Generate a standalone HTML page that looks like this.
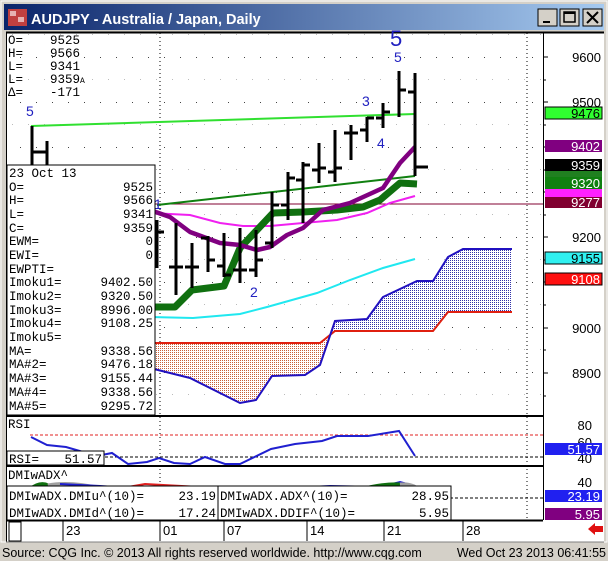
<!DOCTYPE html>
<html><head><meta charset="utf-8"><style>
body{margin:0;width:608px;height:561px;overflow:hidden;background:#d4d0c8;font-family:"Liberation Sans",sans-serif}
svg{display:block}
.m{font-family:"Liberation Mono",monospace;font-size:12.5px}
</style></head><body>
<svg width="608" height="561" viewBox="0 0 608 561" xmlns="http://www.w3.org/2000/svg">
<defs>
<linearGradient id="tb" x1="0" x2="1"><stop offset="0" stop-color="#0a246a"/><stop offset="1" stop-color="#a6caf0"/></linearGradient>
<pattern id="pr" width="2" height="2" patternUnits="userSpaceOnUse"><rect width="2" height="2" fill="#fff"/><rect width="1" height="1" fill="#c8603a"/></pattern>
<pattern id="pb" width="2" height="2" patternUnits="userSpaceOnUse"><rect width="2" height="2" fill="#fff"/><rect width="1" height="1" fill="#3030a8"/></pattern>
<pattern id="gd" width="16" height="45" patternUnits="userSpaceOnUse" x="4" y="57"><rect x="0" y="0" width="1" height="1" fill="#444"/><rect x="8" y="22" width="1" height="1" fill="#bbb"/></pattern>
</defs>
<rect x="0" y="0" width="608" height="561" fill="#d4d0c8"/>
<rect x="1" y="1" width="606" height="541" fill="none" stroke="#fff"/>
<rect x="4" y="4" width="600" height="26" fill="url(#tb)"/>
<rect x="8" y="9" width="19" height="17" fill="#c04040"/><rect x="10" y="11" width="6" height="5" fill="#fff" opacity=".6"/><rect x="18" y="17" width="6" height="5" fill="#fff" opacity=".6"/>
<text x="31" y="24" fill="#fff" font-weight="bold" font-size="14.5">AUDJPY - Australia / Japan, Daily</text>
<g stroke="#000" fill="#d4d0c8">
<rect x="538" y="9" width="19" height="17"/><rect x="560" y="9" width="19" height="17"/><rect x="583" y="9" width="19" height="17"/>
</g>
<rect x="543" y="21" width="7" height="2" fill="#000"/>
<rect x="564" y="12" width="11" height="10" fill="none" stroke="#000" stroke-width="1.5"/><rect x="564" y="12" width="11" height="2" fill="#000"/>
<path d="M587 12l11 11M598 12l-11 11" stroke="#000" stroke-width="2"/>
<rect x="6" y="32" width="598" height="510" fill="#fff"/>
<rect x="6" y="32" width="537" height="383" fill="url(#gd)"/>
<line x1="6" y1="32.5" x2="604" y2="32.5" stroke="#000" stroke-width="2"/>
<line x1="6.5" y1="32" x2="6.5" y2="542" stroke="#000"/>
<line x1="543.5" y1="32" x2="543.5" y2="520" stroke="#000"/>
<line x1="160" y1="33" x2="160" y2="520" stroke="#000" stroke-dasharray="1,3"/>
<line x1="527" y1="33" x2="527" y2="520" stroke="#000" stroke-dasharray="1,3"/>
<g stroke="#000">
<path d="M543 57h5M543 80h3M543 102h5M543 125h3M543 147h5M543 170h3M543 192h5M543 215h3M543 237h5M543 260h3M543 282h5M543 305h3M543 328h5M543 350h3M543 373h5M543 396h3"/>
</g>
<g font-size="13" fill="#000" text-anchor="end">
<text x="601" y="62">9600</text><text x="601" y="107">9500</text><text x="601" y="242">9200</text><text x="601" y="333">9000</text><text x="601" y="378">8900</text>
</g>
<polygon points="150,343 320,343 329,337 320,365 305,375 272,376 256,400 240,403 190,378 150,368" fill="url(#pr)"/>
<polygon points="329,337 335,321 367,319 383,297 417,281 433,281 448,257 463,249 512,249 512,312 448,312 433,331 335,331" fill="url(#pb)"/>
<polyline points="150,343 320,343 335,331 433,331 448,312 512,312" fill="none" stroke="#e02010" stroke-width="2"/>
<polyline points="150,368 190,378 240,403 256,400 272,376 305,375 320,365 335,321 367,319 383,297 417,281 433,281 448,257 463,249 512,249" fill="none" stroke="#2010c0" stroke-width="2"/>
<line x1="155" y1="204" x2="543" y2="204" stroke="#800030" stroke-width="1"/>
<polyline points="150,317 193,318 240,314 267,307 317,293 350,280 383,268 415,259" fill="none" stroke="#20e8f0" stroke-width="2"/>
<polyline points="31,126 415,114" fill="none" stroke="#30e030" stroke-width="2"/>
<polyline points="157,205 415,176" fill="none" stroke="#108010" stroke-width="2"/>
<polyline points="150,213 190,215 220,223 243,226 270,226 303,223 337,220 367,213 390,203 415,196" fill="none" stroke="#f020f0" stroke-width="2"/>
<polyline points="150,307 175,307 192,290 224,286 240,248 257,230 273,213 303,212 337,210 363,207 380,200 400,183 417,184" fill="none" stroke="#107010" stroke-width="7" stroke-linejoin="round"/>
<polyline points="150,210 170,217 190,232 220,243 240,245 257,250 270,247 287,235 303,228 323,210 350,203 383,188 400,163 415,147" fill="none" stroke="#800080" stroke-width="4.5" stroke-linejoin="round"/>
<g stroke="#000" stroke-width="3" fill="none">
<path d="M32 126v40M32 152h8M47 141v25M40 152h7"/>
<path d="M157 220v48M157 228h-6M157 232h7"/>
<path d="M176 223v72M176 267h-7M176 267h7"/>
<path d="M192 243v45M192 267h-7M192 267h7"/>
<path d="M208 236v36M208 238h-7M208 260h7"/>
<path d="M224 233v44M224 266h-7M224 275h7"/>
<path d="M240 228v55M240 270h-7M240 270h7"/>
<path d="M256 230v47M256 270h-7M256 260h7"/>
<path d="M272 192v56M272 243h-7M272 205h7"/>
<path d="M288 172v48M288 205h-7M288 178h7"/>
<path d="M303 162v61M303 180h-7M303 165h7"/>
<path d="M319 143v40M319 170h-7M319 168h7"/>
<path d="M335 130v52M335 172h-7M335 168h7"/>
<path d="M351 125v35M351 133h-7M351 133h7"/>
<path d="M367 117v25M367 130h-7M367 118h7"/>
<path d="M383 103v25M383 118h-7M383 112h7"/>
<path d="M399 71v46M399 90h7"/>
<path d="M415 73v103M415 92h-7M415 167h13"/>
</g>
<g fill="#2020c0" font-size="14">
<text x="26" y="116">5</text><text x="394" y="62">5</text><text x="390" y="46" font-size="22">5</text>
<text x="362" y="106">3</text><text x="377" y="148">4</text><text x="250" y="297">2</text><text x="154" y="209">1</text>
</g>
<g font-size="13" text-anchor="end">
<rect x="545" y="107" width="57" height="12" fill="#30ff30" stroke="#000"/><text x="600" y="118" fill="#000">9476</text>
<rect x="545" y="140" width="57" height="12" fill="#800080"/><text x="600" y="151" fill="#fff">9402</text>
<rect x="545" y="171" width="57" height="6" fill="#208020"/>
<rect x="545" y="159" width="57" height="12" fill="#000"/><text x="600" y="170" fill="#fff">9359</text>
<rect x="545" y="177" width="57" height="12" fill="#108010"/><text x="600" y="188" fill="#fff">9320</text>
<rect x="545" y="189" width="57" height="8" fill="#ff20ff"/>
<rect x="545" y="197" width="57" height="11" fill="#800030"/><text x="600" y="207" fill="#fff">9277</text>
<rect x="545" y="252" width="57" height="12" fill="#30f0f0" stroke="#000"/><text x="600" y="263" fill="#000">9155</text>
<rect x="545" y="273" width="57" height="12" fill="#ff1010" stroke="#000"/><text x="600" y="284" fill="#fff">9108</text>
</g>
<g class="m" fill="#000">
<text x="8" y="44">O=</text><text x="50" y="44">9525</text>
<text x="8" y="57">H=</text><text x="50" y="57">9566</text>
<text x="8" y="70">L=</text><text x="50" y="70">9341</text>
<text x="8" y="83">L=</text><text x="50" y="83">9359<tspan font-size="8">A</tspan></text>
<text x="8" y="96">Δ=</text><text x="50" y="96">-171</text>
</g>
<rect x="7" y="165" width="148" height="250" fill="#fff" stroke="#000"/>
<g class="m" fill="#000">
<text x="9" y="177">23 Oct 13</text>
<text x="9" y="191">O=</text><text x="153" y="191" text-anchor="end">9525</text>
<text x="9" y="204">H=</text><text x="153" y="204" text-anchor="end">9566</text>
<text x="9" y="218">L=</text><text x="153" y="218" text-anchor="end">9341</text>
<text x="9" y="232">C=</text><text x="153" y="232" text-anchor="end">9359</text>
<text x="9" y="245">EWM=</text><text x="153" y="245" text-anchor="end">0</text>
<text x="9" y="259">EWI=</text><text x="153" y="259" text-anchor="end">0</text>
<text x="9" y="273">EWPTI=</text>
<text x="9" y="286"> Imoku1=</text><text x="153" y="286" text-anchor="end">9402.50</text>
<text x="9" y="300"> Imoku2=</text><text x="153" y="300" text-anchor="end">9320.50</text>
<text x="9" y="314"> Imoku3=</text><text x="153" y="314" text-anchor="end">8996.00</text>
<text x="9" y="327"> Imoku4=</text><text x="153" y="327" text-anchor="end">9108.25</text>
<text x="9" y="341"> Imoku5=</text>
<text x="9" y="355">MA=</text><text x="153" y="355" text-anchor="end">9338.56</text>
<text x="9" y="368">MA#2=</text><text x="153" y="368" text-anchor="end">9476.18</text>
<text x="9" y="382">MA#3=</text><text x="153" y="382" text-anchor="end">9155.44</text>
<text x="9" y="396">MA#4=</text><text x="153" y="396" text-anchor="end">9338.56</text>
<text x="9" y="410">MA#5=</text><text x="153" y="410" text-anchor="end">9295.72</text>
</g>
<line x1="6" y1="416" x2="543" y2="416" stroke="#000" stroke-width="2"/>
<line x1="30" y1="435" x2="543" y2="435" stroke="#e02020" stroke-dasharray="3,2"/>
<line x1="100" y1="457" x2="543" y2="457" stroke="#000" stroke-dasharray="3,2"/>
<polyline points="31,437 47,445 66,447 97,456 112,453 128,464 147,462 159,458 174,463 190,464 205,457 225,464 240,464 271,449 295,444 322,441 337,436 368,436 399,431 415,456" fill="none" stroke="#2020d0" stroke-width="2"/>
<text x="8" y="428" class="m">RSI</text>
<rect x="7" y="451" width="97" height="14" fill="#fff" stroke="#000"/>
<text x="9" y="463" class="m">RSI=</text><text x="102" y="463" class="m" text-anchor="end">51.57</text>
<g font-size="13" text-anchor="end"><text x="592" y="430">80</text><text x="592" y="447">60</text><text x="592" y="463">40</text>
<rect x="545" y="443" width="57" height="12" fill="#2020f0"/><text x="600" y="454" fill="#fff">51.57</text></g>
<line x1="6" y1="466" x2="543" y2="466" stroke="#000" stroke-width="2"/>
<text x="8" y="479" class="m">DMIwADX^</text>
<path d="M30 490 Q40 482 48 486" stroke="#107010" stroke-width="5" fill="none"/>
<path d="M48 486 Q70 482 100 489" stroke="#a0a0a0" stroke-width="5" fill="none"/>
<polyline points="60,484 100,486 160,490" stroke="#2020d0" stroke-width="2" fill="none"/>
<polyline points="110,490 145,484 200,487 250,490" stroke="#e02020" stroke-width="2" fill="none"/>
<polyline points="250,490 330,486 380,487 400,482 415,486" stroke="#2020d0" stroke-width="2" fill="none"/>
<path d="M360 490 Q385 484 400 485" stroke="#107010" stroke-width="5" fill="none"/>
<path d="M400 485 Q412 484 418 490" stroke="#a0a0a0" stroke-width="5" fill="none"/>
<line x1="450" y1="498" x2="543" y2="498" stroke="#000" stroke-dasharray="3,2"/>
<rect x="7" y="486" width="211" height="34" fill="#fff" stroke="#000"/>
<rect x="218" y="486" width="233" height="34" fill="#fff" stroke="#000"/>
<g class="m">
<text x="9" y="500">DMIwADX.DMIu^(10)=</text><text x="216" y="500" text-anchor="end">23.19</text>
<text x="9" y="517">DMIwADX.DMId^(10)=</text><text x="216" y="517" text-anchor="end">17.24</text>
<text x="220" y="500">DMIwADX.ADX^(10)=</text><text x="449" y="500" text-anchor="end">28.95</text>
<text x="220" y="517">DMIwADX.DDIF^(10)=</text><text x="449" y="517" text-anchor="end">5.95</text>
</g>
<g font-size="13" text-anchor="end"><text x="592" y="487">40</text>
<rect x="545" y="490" width="57" height="12" fill="#2020f0"/><text x="600" y="501" fill="#fff">23.19</text>
<rect x="545" y="508" width="57" height="12" fill="#800080"/><text x="600" y="519" fill="#fff">5.95</text></g>
<line x1="6" y1="520.5" x2="543" y2="520.5" stroke="#000" stroke-width="2"/>
<rect x="9" y="522" width="12" height="19" fill="#fff" stroke="#000"/>
<g stroke="#000"><path d="M63 521v20M160 521v20M224 521v20M307 521v20M384 521v20M463 521v20"/></g>
<g font-size="13"><text x="66" y="535">23</text><text x="163" y="535">01</text><text x="227" y="535">07</text><text x="310" y="535">14</text><text x="387" y="535">21</text><text x="466" y="535">28</text></g>
<path d="M588 529l7-6v3h8v6h-8v3z" fill="#e01010"/>
<line x1="6" y1="542" x2="604" y2="542" stroke="#808080"/>
<text x="2" y="557" font-size="12.5">Source: CQG Inc. © 2013 All rights reserved worldwide. http://www.cqg.com</text>
<text x="606" y="557" font-size="12.5" text-anchor="end">Wed Oct 23 2013 06:41:55</text>
</svg>
</body></html>
